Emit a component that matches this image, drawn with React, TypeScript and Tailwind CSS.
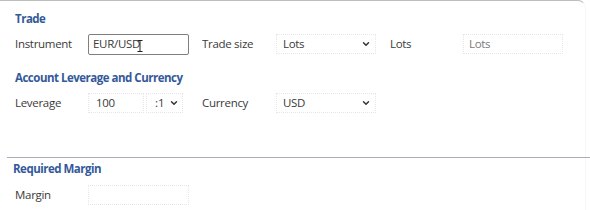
import { ChevronDown } from 'lucide-react'

const font = { fontFamily: '"Open Sans", "Noto Sans", sans-serif' }

function Heading({ children, className = '' }: { children: string; className?: string }) {
  return (
    <div className={`h-[20px] text-[11.5px] font-bold leading-[20px] tracking-[-0.5px] text-[#34599a] ${className}`}>
      {children}
    </div>
  )
}

function Label({ children, w = 'w-[73px]' }: { children: string; w?: string }) {
  return <div className={`${w} shrink-0 text-[11.5px] tracking-[-0.3px] text-[#3a3a3a]`}>{children}</div>
}

function Select({ value, w }: { value: string; w: string }) {
  return (
    <div
      className={`${w} flex h-[20px] shrink-0 items-center justify-between border border-dotted border-[#e6e6e6] pl-[6px] pr-[4px] text-[11.5px] tracking-[-0.3px] text-[#3a3a3a]`}
    >
      <span>{value}</span>
      <ChevronDown size={10} strokeWidth={3.5} className="text-[#333]" />
    </div>
  )
}

export default function App() {
  return (
    <div className="h-[210px] w-[590px] overflow-hidden bg-white" style={font}>
      <div className="h-[210px] w-[586px] rounded-tr-[8px] border-t border-r border-t-[#bdbdbd] border-r-[#f8f8f8]">
        <div className="pl-[15px] pt-[8px]">
          <Heading>Trade</Heading>
          <div className="mt-[5px] flex h-[20px] items-center">
            <Label>Instrument</Label>
            <div className="relative flex h-[21px] w-[101px] items-center rounded-[2px] border border-[#7f7f7f] pl-[4px] text-[11.5px] tracking-[-0.3px] text-[#3a3a3a]">
              EUR/USD
              <svg width="6" height="12" viewBox="0 0 6 12" className="absolute left-[48px] top-[5px]">
                <path d="M0.5 0.5h5M0.5 11.5h5M3 0.5v11" stroke="#222" strokeWidth="1" fill="none" />
              </svg>
            </div>
            <div className="w-[13px]" />
            <Label w="w-[74px]">Trade size</Label>
            <Select value="Lots" w="w-[100px]" />
            <div className="w-[14px]" />
            <Label>Lots</Label>
            <div className="flex h-[20px] w-[100px] items-center border border-dotted border-[#e6e6e6] pl-[5px] text-[11.5px] tracking-[-0.3px] text-[#7a7a7a]">
              Lots
            </div>
          </div>
          <Heading className="mt-[14px]">Account Leverage and Currency</Heading>
          <div className="mt-[5px] flex h-[20px] items-center">
            <Label>Leverage</Label>
            <div className="flex h-[20px] w-[56px] items-center border border-dotted border-[#e6e6e6] pl-[7px] text-[11.5px] tracking-[-0.3px] text-[#3a3a3a]">
              100
            </div>
            <div className="w-[2px]" />
            <div className="flex h-[20px] w-[37px] items-center justify-between border border-dotted border-[#e6e6e6] pl-[8px] pr-[3px] text-[11.5px] text-[#3a3a3a]">
              <span>:1</span>
              <ChevronDown size={10} strokeWidth={3.5} className="text-[#333]" />
            </div>
            <div className="w-[19px]" />
            <Label w="w-[74px]">Currency</Label>
            <Select value="USD" w="w-[100px]" />
          </div>
        </div>
        <div className="ml-[7px] mr-[-5px] mt-[44px] h-[1px] bg-[#a7adbb]" />
        <div className="pl-[13px] pt-[1px]">
          <Heading>Required Margin</Heading>
          <div className="mt-[6px] flex h-[20px] items-center pl-[2px]">
            <Label>Margin</Label>
            <div className="h-[20px] w-[101px] border border-dotted border-[#e6e6e6]" />
          </div>
        </div>
      </div>
    </div>
  )
}
